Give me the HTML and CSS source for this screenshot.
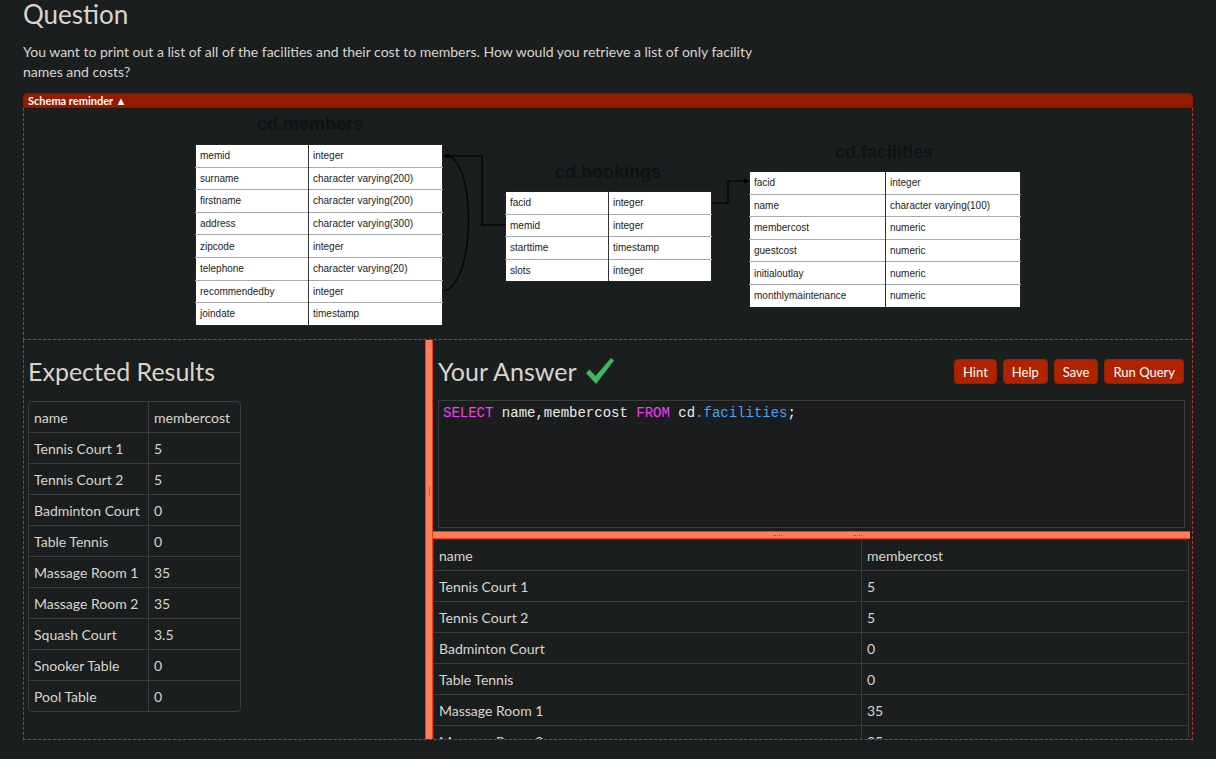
FILE: index.html
```html
<!DOCTYPE html>
<html>
<head>
<meta charset="utf-8">
<link rel="stylesheet" href="styles.css">
</head>
<body>
<div class="page">
  <h1 class="q-title">Question</h1>
  <p class="q-text">You want to print out a list of all of the facilities and their cost to members. How would you retrieve a list of only facility names and costs?</p>
  <div class="schema-bar">Schema reminder ▲</div>
  <div class="schema-box">
    <div class="diagram">
      <svg class="links" width="1168" height="231" viewBox="0 0 1168 231">
        <g fill="none" stroke="#000" stroke-width="1.2">
          <path d="M481 117 H458 V48 H424"/>
          <path d="M419 183 C452 178 452 54 424 48"/>
          <path d="M688 95 H704 V73 H721"/>
        </g>
        <g fill="#000">
          <path d="M419 48 L425 45.5 L425 50.5 Z"/>
          <path d="M726 73 L720 70.5 L720 75.5 Z"/>
        </g>
      </svg>
      <div class="dtitle t-members">cd.members</div>
      <div class="dtitle t-bookings">cd.bookings</div>
      <div class="dtitle t-facilities">cd.facilities</div>
      <table class="dtable d-members">
        <tr><td>memid</td><td>integer</td></tr>
        <tr><td>surname</td><td>character varying(200)</td></tr>
        <tr><td>firstname</td><td>character varying(200)</td></tr>
        <tr><td>address</td><td>character varying(300)</td></tr>
        <tr><td>zipcode</td><td>integer</td></tr>
        <tr><td>telephone</td><td>character varying(20)</td></tr>
        <tr><td>recommendedby</td><td>integer</td></tr>
        <tr><td>joindate</td><td>timestamp</td></tr>
      </table>
      <table class="dtable d-bookings">
        <tr><td>facid</td><td>integer</td></tr>
        <tr><td>memid</td><td>integer</td></tr>
        <tr><td>starttime</td><td>timestamp</td></tr>
        <tr><td>slots</td><td>integer</td></tr>
      </table>
      <table class="dtable d-facilities">
        <tr><td>facid</td><td>integer</td></tr>
        <tr><td>name</td><td>character varying(100)</td></tr>
        <tr><td>membercost</td><td>numeric</td></tr>
        <tr><td>guestcost</td><td>numeric</td></tr>
        <tr><td>initialoutlay</td><td>numeric</td></tr>
        <tr><td>monthlymaintenance</td><td>numeric</td></tr>
      </table>
    </div>
  </div>
  <div class="workspace">
    <div class="left-panel">
      <div class="panel-head">
        <h2 class="panel-title">Expected Results</h2>
      </div>
      <table class="res-table expected">
        <tr><td class="c1">name</td><td>membercost</td></tr>
        <tr><td class="c1">Tennis Court 1</td><td>5</td></tr>
        <tr><td class="c1">Tennis Court 2</td><td>5</td></tr>
        <tr><td class="c1">Badminton Court</td><td>0</td></tr>
        <tr><td class="c1">Table Tennis</td><td>0</td></tr>
        <tr><td class="c1">Massage Room 1</td><td>35</td></tr>
        <tr><td class="c1">Massage Room 2</td><td>35</td></tr>
        <tr><td class="c1">Squash Court</td><td>3.5</td></tr>
        <tr><td class="c1">Snooker Table</td><td>0</td></tr>
        <tr><td class="c1">Pool Table</td><td>0</td></tr>
      </table>
    </div>
    <div class="vsplit"><span class="vdots"></span></div>
    <div class="right-panel">
      <div class="answer-area">
        <div class="panel-head">
          <h2 class="panel-title">Your Answer</h2>
          <svg class="check" width="30" height="28" viewBox="0 0 30 28"><path d="M1 16 L4.5 12.5 L10.5 19 L26 1 L29 3.5 L11 27 Z" fill="#3cb95a"/></svg>
          <div class="buttons">
            <button class="btn">Hint</button>
            <button class="btn">Help</button>
            <button class="btn">Save</button>
            <button class="btn">Run Query</button>
          </div>
        </div>
        <div class="editor"><span class="kw">SELECT</span> name,membercost <span class="kw">FROM</span> cd<span class="id">.facilities</span>;</div>
      </div>
      <div class="hsplit"><span class="hdots"></span><span class="hdots second"></span></div>
      <table class="res-table actual">
        <tr><td class="c1">name</td><td>membercost</td></tr>
        <tr><td class="c1">Tennis Court 1</td><td>5</td></tr>
        <tr><td class="c1">Tennis Court 2</td><td>5</td></tr>
        <tr><td class="c1">Badminton Court</td><td>0</td></tr>
        <tr><td class="c1">Table Tennis</td><td>0</td></tr>
        <tr><td class="c1">Massage Room 1</td><td>35</td></tr>
        <tr><td class="c1">Massage Room 2</td><td>35</td></tr>
        <tr><td class="c1">Squash Court</td><td>3.5</td></tr>
        <tr><td class="c1">Snooker Table</td><td>0</td></tr>
        <tr><td class="c1">Pool Table</td><td>0</td></tr>
      </table>
    </div>
  </div>
</div>
</body>
</html>
```
FILE: styles.css
```css
html, body {
  margin: 0;
  padding: 0;
  background: #1b1e1f;
}
body {
  font-family: Lato, "Open Sans", sans-serif;
  color: #d9d5cd;
  height: 759px;
  overflow: hidden;
}
.page {
  padding: 0 23px;
}
.q-title {
  margin: 0;
  height: 30px;
  font-size: 26px;
  line-height: 28px;
  font-weight: normal;
  color: #d9d5cd;
  padding-top: 0;
}
.q-text {
  margin: 12px 0 11px 0;
  max-width: 770px;
  font-size: 14px;
  line-height: 20px;
}
.schema-bar {
  height: 15px;
  box-sizing: border-box;
  background: #951b00;
  border: 1px solid #7d1a05;
  border-radius: 4px 4px 0 0;
  color: #fff;
  font-size: 11px;
  line-height: 13px;
  padding-left: 4px;
  font-weight: bold;
}
.schema-box {
  height: 232px;
  box-sizing: border-box;
  border: 1px dashed #c8330f;
  border-top: none;
}
.diagram {
  position: relative;
  height: 231px;
}
.links {
  position: absolute;
  left: 0;
  top: 0;
}
.dtitle {
  position: absolute;
  font-family: "Liberation Sans", Arial, sans-serif;
  font-weight: bold;
  font-size: 18px;
  line-height: 20px;
  color: #111213;
  text-align: center;
  width: 200px;
}
.t-members { left: 186px; top: 6px; }
.t-bookings { left: 484px; top: 54px; }
.t-facilities { left: 760px; top: 34px; }
.dtable {
  position: absolute;
  border-collapse: collapse;
  background: #fff;
  border: 1px solid #222;
  font-family: "Liberation Sans", Arial, sans-serif;
  font-size: 10px;
  color: #222;
}
.dtable td {
  height: 22.6px;
  padding: 0 0 0 4px;
  border-top: 1px solid #a8a8a8;
  box-sizing: border-box;
}
.dtable tr:first-child td { border-top: none; }
.dtable td:first-child { border-right: 1px solid #333; }
.d-members { left: 171px; top: 36px; width: 248px; }
.d-members td:first-child { width: 113px; }
.d-bookings { left: 481px; top: 83px; width: 207px; }
.d-bookings td:first-child { width: 103px; }
.d-facilities { left: 725px; top: 63px; width: 272px; }
.d-facilities td:first-child { width: 136px; }

.workspace {
  height: 400px;
  box-sizing: border-box;
  border: 1px dashed #c8330f;
  border-top: none;
  display: grid;
  grid-template-columns: 401px 8px 1fr;
  overflow: hidden;
}
.left-panel {
  padding-left: 4px;
}
.panel-head {
  display: flex;
  align-items: center;
  height: 25px;
  padding-top: 19px;
  margin-bottom: 17px;
}
.panel-title {
  margin: 0;
  font-size: 25px;
  font-weight: normal;
  line-height: 25px;
  color: #d9d5cd;
}
.res-table {
  border-collapse: separate;
  border-spacing: 0;
  border: 1px solid #3b3b3b;
  border-radius: 4px;
  font-size: 14px;
}
.res-table td {
  height: 31px;
  box-sizing: border-box;
  padding: 0 5px;
  border-top: 1px solid #3b3b3b;
  white-space: nowrap;
}
.res-table tr:first-child td { border-top: none; height: 30px; }
.res-table td.c1 { border-right: 1px solid #3b3b3b; }
.expected td.c1 { width: 120px; }
.expected { width: 213px; }

.vsplit {
  background: #ff7d5b;
  border-left: 1px solid #e0401c;
  border-right: 1px solid #e0401c;
  display: flex;
  justify-content: center;
  padding-top: 147px;
}
.vdots {
  width: 0;
  height: 8px;
  border-left: 1px dotted #c24a22;
}
.right-panel {
  margin-right: 2px;
  display: flex;
  flex-direction: column;
}
.answer-area {
  padding: 0 5px;
}
.answer-area .panel-head {
  margin-bottom: 16px;
}
.check {
  margin-left: 8px;
  margin-top: -2px;
}
.buttons {
  margin-left: auto;
  margin-right: 1px;
  display: flex;
  gap: 6px;
  height: 25px;
}
.btn {
  height: 25px;
  padding: 0 8px;
  background: #b02300;
  border: 1px solid #9a1e00;
  border-radius: 4px;
  color: #fff;
  font-family: Lato, "Open Sans", sans-serif;
  font-size: 13px;
}
.editor {
  height: 128px;
  box-sizing: border-box;
  border: 1px solid #3b3b3b;
  background: #1a1c1e;
  padding: 4px 4px;
  font-family: "Liberation Mono", "Courier New", monospace;
  font-size: 14px;
  line-height: 17px;
  color: #ececec;
  margin-bottom: 3px;
}
.kw { color: #f53ef5; }
.id { color: #43a4f0; }
.hsplit {
  height: 8px;
  box-sizing: border-box;
  background: #ff7d5b;
  border-top: 1px solid #e0401c;
  border-bottom: 1px solid #e0401c;
  display: flex;
  align-items: center;
  padding-left: 341px;
}
.hdots {
  width: 8px;
  height: 0;
  border-top: 1px dotted #c24a22;
}
.hdots.second { margin-left: 72px; }
.actual { width: 756px; }
.actual td.c1 { width: 428px; }
```
